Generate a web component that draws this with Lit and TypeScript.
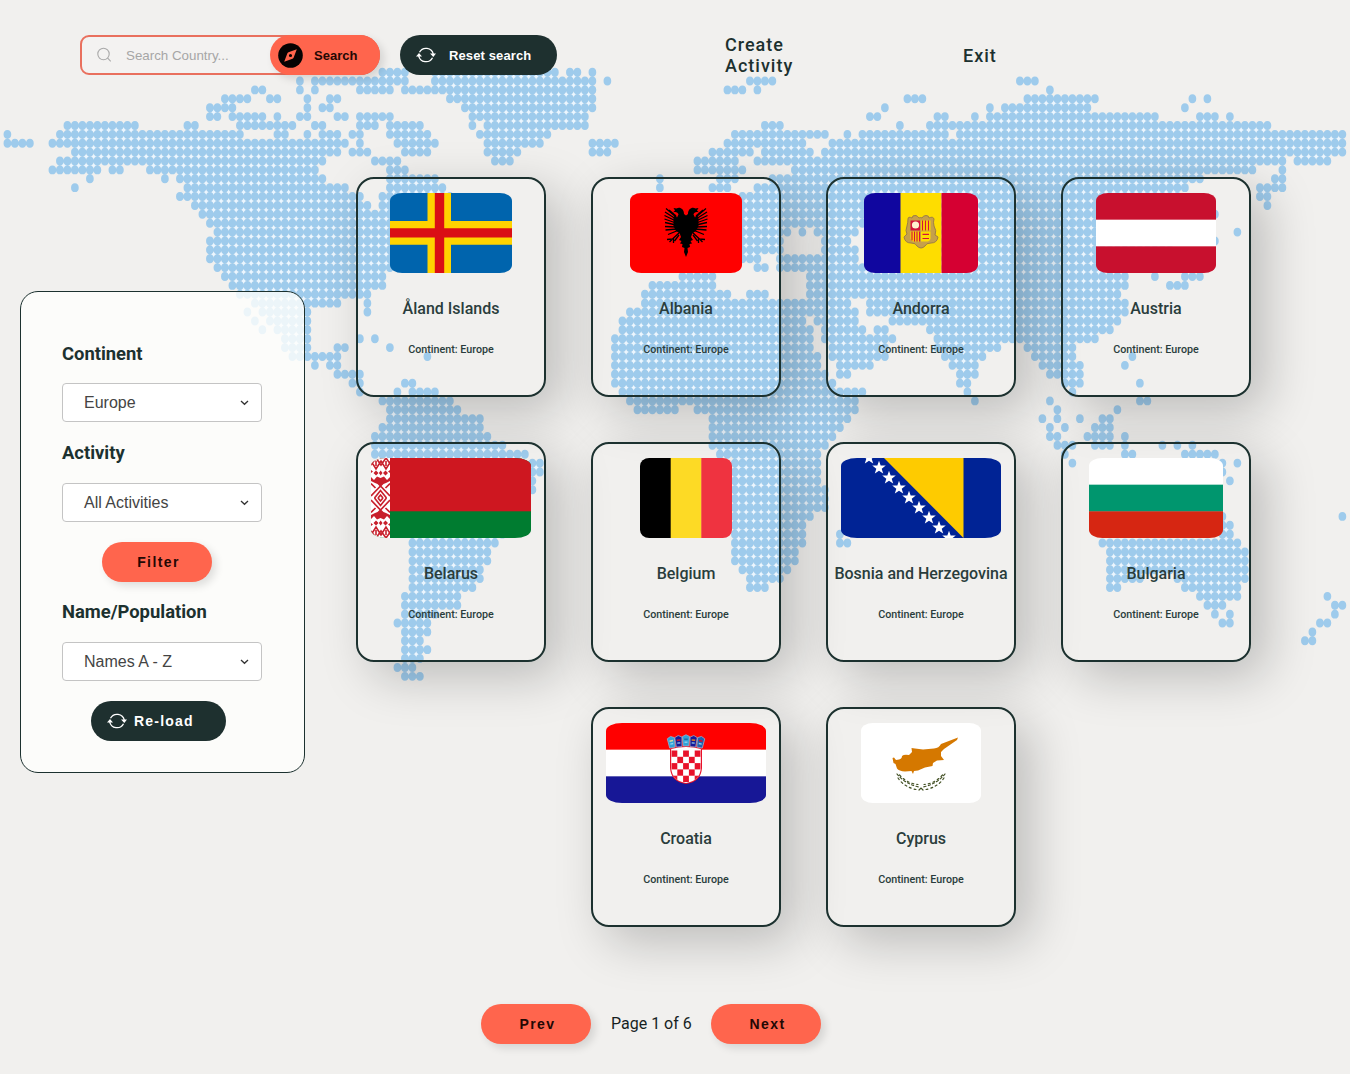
import { LitElement, html, svg, css, SVGTemplateResult } from "lit";
import { customElement, property } from "lit/decorators.js";

/* ---------- dotted world map ---------- */

const COL = 7.5;
const ROW = 8.885;
const X0 = 7.4;
const Y0 = 72.15;

// One string per dot row: inclusive column runs.
const MAP_ROWS: string[] = [
  "50-53 57-73 75-76 78",
  "39 41-53 57-78 80 99-102 135-137",
  "33-34 39 41 47-51 53-78 96-98 100 139",
  "29-32 35-36 40 43-44 59-78 120-122 136-145 158 160",
  "27-30 40 42-43 61-78 117 131 133-144 157",
  "27-28 30-34 36 39-40 44-45 47-51 62-77 115-116 124-125 129 131-153 159-161 163",
  "8-17 24-25 31-38 41-42 47-49 51-55 62 64-77 101-103 119 123-168",
  "0 7-31 36-37 40 42-44 46-47 51-56 63-72 97-109 112 114-125 127-178",
  "0-3 6-45 47 52-56 57 64-71 78-81 96-106 110-178",
  "9-44 46-48 53-56 64-68 78-80 94-99 101-107 109-178",
  "7-42 49-52 65-67 92-97 100-170 172-176",
  "6-12 14-15 19-41 51-53 92-98 105-166 170",
  "11 21 23-42 51-57 87 95-97 102-159 169-170",
  "9 24-45 51-58 87 94-96 100-157 167-170",
  "23-47 50-59 98-156 167-168",
  "25-48 50-59 98-155 168",
  "26-51 98-155 161",
  "27-51 98-155",
  "28-51 98-104 106 108-113 115-155 164",
  "27-51 98-103 109-112 115-155 161",
  "27-51 98-103 109-113 115-155",
  "27-51 98-100 103-113 115-155",
  "28-51 100-101 103-155",
  "29-50 90-94 107-149 153 157-159",
  "30-50 86-94 107-149 155-157",
  "31-48 85-96 99-101 107-148",
  "33-44 48 85-112 115-149",
  "32 34-40 48 83-113 115-149",
  "33 35-40 82-106 108-113 118-148",
  "34 36-40 82-107 109-114 116-117 123-147",
  "37-40 47 49 81-107 109-118 124-145",
  "37-40 44-45 51 81-107 110-117 124-132 136-142",
  "38-44 56 81-108 110-117 125-130 137-142 150",
  "41 43-44 81-108 111-115 126-129 138-143 149",
  "44-47 81-109 111-112 127-129 139-143",
  "46-47 53-54 81-110 127-128 141-143 151",
  "47 52 54-57 82-114 128 142",
  "50-59 83-113 129 139 151-152",
  "51-60 84-89 92-113 140 148",
  "51-63 94-112 138 140 143 146-147",
  "50-63 94-111 139 141 145-147",
  "49-64 94-110 139-140 144-147 149",
  "49-66 94-109 140-142 145-147 149 154 156 158",
  "49-69 95-108 141 149-150 157-161",
  "50-68 70-71 97-108 142 162 164",
  "50-68 70-71 97-108 162",
  "51-68 70 97-108 163",
  "52-68 70 97-109",
  "53-68 97-109",
  "53-68 97-109",
  "54-67 97-107 162 178",
  "54-66 97-106 162-163",
  "54-66 97-106 111 162-163",
  "54-65 97-106 111-112 146-164",
  "54-64 97-105 147-165",
  "54-64 97-105 147-165",
  "54-63 98-104 147-165",
  "54-63 99-103 147-151 156-165",
  "54-62 99-101 147-148 157-164",
  "53-60 159-164 176",
  "53-60 160-162 177-178",
  "53-57 161 163 177",
  "52-56 162-163 175-176",
  "53-56 174",
  "53-55 173-174",
  "53-56",
  "53-55",
  "52-54",
  "53-55",
];

function buildMap(): { dots: string; sparks: string } {
  const grid = MAP_ROWS.map((row) => {
    const set = new Set<number>();
    for (const run of row.split(" ")) {
      const [a, b] = run.split("-").map(Number);
      for (let c = a; c <= (b ?? a); c++) set.add(c);
    }
    return set;
  });
  const dots: string[] = [];
  const sparks: string[] = [];
  grid.forEach((set, r) => {
    const y = Y0 + r * ROW;
    const below = grid[r + 1];
    set.forEach((c) => {
      const x = X0 + c * COL;
      dots.push(
        `M${(x - 3.85).toFixed(2)} ${y.toFixed(2)}c0-2.9 1.4-4.45 3.85-4.45s3.85 1.55 3.85 4.45s-1.4 4.45-3.85 4.45s-3.85-1.55-3.85-4.45z`
      );
      if (below && set.has(c + 1) && below.has(c) && below.has(c + 1)) {
        sparks.push(`M${(x + 2).toFixed(2)} ${(y + ROW / 2 - 1.8).toFixed(2)}h3.5v3.6h-3.5z`);
      }
    });
  });
  return { dots: dots.join(""), sparks: sparks.join("") };
}

const MAP = buildMap();

@customElement("world-map")
export class WorldMap extends LitElement {
  static styles = css`
    :host { display: block; }
    .map { display: block; }
    .spark { fill: #ebf6ff; }
    .dot { fill: #9ecbec; }
  `;
  render() {
    return html`<svg class="map" width="1350" height="700" viewBox="0 0 1350 700" aria-hidden="true">
      <path class="spark" d=${MAP.sparks}></path>
      <path class="dot" d=${MAP.dots}></path>
    </svg>`;
  }
}

/* ---------- flags ---------- */

function star(cx: number, cy: number, r: number): string {
  const pts: string[] = [];
  for (let i = 0; i < 10; i++) {
    const rad = i % 2 ? r * 0.4 : r;
    const a = -Math.PI / 2 + (i * Math.PI) / 5;
    pts.push(`${(cx + rad * Math.cos(a)).toFixed(2)},${(cy + rad * Math.sin(a)).toFixed(2)}`);
  }
  return pts.join(" ");
}

const stripes = (w: number, colors: string[]) =>
  colors.map((c, i) => svg`<rect y=${(i * 80) / 3} width=${w} height="27" fill=${c}></rect>`);

const eagleHalf = svg`
  <path d="M56 22.500 L54 21 C54 15.500 49.500 13.500 46.500 15.500 L43.500 15 L45 17.500 L43 19.500 C46 18.500 48 19.500 48.500 21.500 L47 24.500 L45 21.500 L43.500 25 L43.500 33 L46 38 L49.500 40 L51 44 L49 47 L51.500 48 L50 50.500 L52.500 51 L52 54 L54.500 55 L54 59 L56 64 Z"></path>
  <path fill="none" stroke="#000" stroke-width="1.300" d="M46 23 L39 17 M46 24 L36 15.500 M46 26 L35 19 M46 28 L34.500 22.500 M46 30 L34.500 26 M46 32 L35 29.500 M46 34 L35 33.500 M47 36 L35.500 37 M49 37 L38 41.500 M50 39 L42.500 46 L37 46.500 M42.500 46 L39.500 49 M43.500 45 L43.500 50 M49 42 L44.500 48"></path>`;

const crownShields: [number, string, string][] = [
  [66, "#2ea3d9", "#d8d8a0"],
  [73, "#171796", "#d01030"],
  [80, "#2ea3d9", "#1d6fa8"],
  [87, "#171796", "#e08020"],
  [94, "#1f62b0", "#d01030"],
];

const checks: [number, number][] = [];
for (let r = 0; r < 6; r++) for (let c = 0; c < 5; c++) if ((r + c) % 2 === 0) checks.push([c, r]);

const ornament = (flip: boolean) => svg`<g transform=${flip ? "translate(0 80) scale(1 -1)" : ""}>
  <path fill="none" stroke="#c8202c" stroke-width="1.600" d="M0 7 L5 0 L10 7 L15 0 L20 7 M0 3 L5 11 L10 3 L15 11 L20 3 M5 3 v5 M15 3 v5"></path>
  <path fill="#c8202c" d="M0 12 l2 1.500 l-2 1.500z M19 12 l-2 1.500 l2 1.500z M5 12.500 l2.500 2.500 l-2.500 2.500 l-2.500-2.500z M14.500 12.500 l2.500 2.500 l-2.500 2.500 l-2.500-2.500z M9.700 12.500 l1.800 2.500 l-1.800 2.500 l-1.800-2.500z"></path>
  <path fill="#c8202c" d="M0 19 L3 22 L6 18.500 L9.500 20 L13 18.500 L16 22 L19 19 V23 L15 25 L12.500 26 L9.500 29 L6.500 26 L4 25 L0 23Z"></path>
  <path fill="none" stroke="#c8202c" stroke-width="1.700" d="M0 25.500 L4.500 30 M19 25.500 L14.500 30 M9.500 28 L0 38 M9.500 28 L19 38 M3.500 40 L9.500 32.500 L15.500 40 M7 40 L9.500 37 L12 40"></path>
</g>`;

const FLAGS: Record<string, { w: number; art: SVGTemplateResult }> = {
  aland: {
    w: 122,
    art: svg`<rect width="122" height="80" fill="#0064ad"></rect>
      <path fill="#ffd300" d="M37.500 0h23.500v80h-23.500z M0 28h122v23.700h-122z"></path>
      <path fill="#da0e15" d="M44.800 0h9.400v80h-9.400z M0 35.200h122v9.400h-122z"></path>`,
  },
  albania: {
    w: 112,
    art: svg`<rect width="112" height="80" fill="#ff0000"></rect>
      ${eagleHalf}<g transform="translate(112 0) scale(-1 1)">${eagleHalf}</g>`,
  },
  andorra: {
    w: 114,
    art: svg`<rect width="37" height="80" fill="#10069f"></rect>
      <rect x="36.500" width="41" height="80" fill="#fedd00"></rect>
      <rect x="77.500" width="37" height="80" fill="#d50032"></rect>
      <path fill="#c6a04a" stroke="#9d7f45" stroke-width="1" d="M44 26 q0-3 4-1 q0-3 4-2.500 q2 1 3 2.500 q2-1 3 0 q1-2.500 4-2.500 q3 0 3 2.500 q4-2 5 1 q-1 3 0 7 q3 5 1 9 l3 2 q-1 6-7 6 q-5 0-6 3 q-4 4-8 0 q-1-3-6-3 q-6 0-7-6 l3-3 q-2-3 0-8 q1-4 1-7z"></path>
      <rect x="46.500" y="27.500" width="9.500" height="10" fill="#d2143a"></rect>
      <circle cx="51.500" cy="32" r="3.600" fill="#fff2d0"></circle>
      <path fill="#fedd00" d="M57 27.500h9.500v10h-9.500z M46.500 38.500h9.500v10h-7q-2.500-1-2.500-3z M57 38.500h9.500v7q0 2-2.500 3h-7z"></path>
      <path stroke="#d2143a" stroke-width="1.200" fill="none" d="M58.500 27.500v10 M61.500 27.500v10 M64.500 27.500v10 M48 38.500v9 M50.500 38.500v10 M53 38.500v10 M55.500 38.500v10 M58.500 41.300h6.500 M58.500 45.500h6.500"></path>`,
  },
  austria: { w: 120, art: svg`${stripes(120, ["#c8102e", "#ffffff", "#c8102e"])}` },
  belarus: {
    w: 160,
    art: svg`<rect width="160" height="80" fill="#007c30"></rect>
      <rect width="160" height="53.300" fill="#ce1720"></rect>
      <rect width="19" height="80" fill="#fff"></rect>
      <svg width="19" height="80">${ornament(false)}${ornament(true)}</svg>`,
  },
  belgium: {
    w: 92,
    art: svg`<rect width="31" height="80" fill="#000"></rect>
      <rect x="30.700" width="31" height="80" fill="#fdda25"></rect>
      <rect x="61.300" width="31" height="80" fill="#ef3340"></rect>`,
  },
  bosnia: {
    w: 160,
    art: svg`<rect width="160" height="80" fill="#002395"></rect>
      <path fill="#fecb00" d="M43 0H122.500V80Z"></path>
      ${[0, 1, 2, 3, 4, 5, 6, 7, 8].map(
        (i) => svg`<polygon fill="#fff" points=${star(28 + i * 10, -0.2 + i * 10, 7.1)}></polygon>`
      )}`,
  },
  bulgaria: { w: 134, art: svg`${stripes(134, ["#ffffff", "#00966e", "#d62612"])}` },
  croatia: {
    w: 160,
    art: svg`${stripes(160, ["#ff0000", "#ffffff", "#171796"])}
      <path fill="#e8112a" d="M64 25 Q80 20.500 96 25 V45 Q95 59 80 61 Q65 59 64 45Z"></path>
      <svg width="160" height="80"><clipPath id="cro"><path d="M65.200 26 Q80 22 94.800 26 V45 Q94 58 80 60 Q66 58 65.200 45Z"></path></clipPath>
        <g clip-path="url(#cro)"><rect x="64" y="22" width="32" height="40" fill="#fff"></rect>
        ${checks.map(
          ([c, r]) => svg`<rect x=${65.500 + c * 5.8} y=${27.500 + r * 6.3} width="5.800" height="6.300" fill="#e8112a"></rect>`
        )}</g></svg>
      ${crownShields.map(
        ([x, a, b], i) => {
          const y = 13.5 + Math.abs(i - 2) * 0.8;
          return svg`<g transform=${`rotate(${(i - 2) * 5} ${x} 22)`}>
            <path fill=${a} stroke="#9fb4d0" stroke-width=".7" d=${`M${x - 3.600} ${y} l3.600-1.800 l3.600 1.800 l-.8 9.500 h-5.600z`}></path>
            <rect x=${x - 1.800} y=${y + 2} width="3.600" height="1.500" fill=${b}></rect>
            <rect x=${x - 1.500} y=${y + 5} width="3" height="1.400" fill="#8fd0ee"></rect></g>`;
        }
      )}`,
  },
  cyprus: {
    w: 120,
    art: svg`<rect width="120" height="80" fill="#fff"></rect>
      <path fill="#d57800" d="M31.500 35 L33 34.500 L35 37 L38 36.500 Q41 35.500 41 33 Q43 31 48 32 L51 29 L50.500 25 L54 25.500 L62 26.500 L73 25.500 Q78 25 80 21 L97 14.500 L96 17 L83 26 L80 29 L80 33 L83 37 L76 37.500 L72 40 L71.500 43 L64 44.500 L57 47.500 L53 48 L52 51 L50.500 48 L44 48.500 Q38 48 36 45.500 L34.500 41 L32.500 40Z"></path>
      <g fill="none" stroke="#435125" stroke-width="1.200" stroke-linecap="round">
        <path stroke-dasharray="2.200 2.400" d="M36 51 Q44 61 58 64 M84 51 Q76 61 62 64"></path>
        <path stroke-dasharray="2 3" d="M38.500 52 Q46 60.500 57 61.500 M81.500 52 Q74 60.500 63 61.500 M37 55 Q43 64 55 66.500 M83 55 Q77 64 65 66.500"></path>
        <path d="M58 67 l2-2 l2 2"></path>
      </g>`,
  },
};

@customElement("country-card")
export class CountryCard extends LitElement {
  @property() flag = "";
  @property() name = "";
  @property() continent = "";

  static styles = css`
    :host { display: block; }
    .card {
      box-sizing: border-box;
      width: 190px;
      height: 220px;
      border: 2px solid #1c312f;
      border-radius: 18px;
      padding-top: 14px;
      display: flex;
      flex-direction: column;
      align-items: center;
      font-family: Roboto, sans-serif;
      color: #2a3d3c;
      box-shadow: 15px 15px 50px rgba(0, 0, 0, 0.22);
    }
    .flag { display: block; height: 80px; border-radius: 10%; overflow: hidden; }
    .name {
      margin: 26px 0 0;
      font-size: 16px;
      line-height: 20px;
      font-weight: 500;
      white-space: nowrap;
    }
    .continent { margin: 24px 0 0; font-size: 10.72px; line-height: 14px; font-weight: 500; }
  `;

  render() {
    const f = FLAGS[this.flag];
    return html`<article class="card">
      <svg class="flag" width=${f.w} height="80" viewBox="0 0 ${f.w} 80" role="img">${f.art}</svg>
      <h2 class="name">${this.name}</h2>
      <p class="continent">Continent: ${this.continent}</p>
    </article>`;
  }
}

/* ---------- icons ---------- */

const searchIcon = html`<svg width="16" height="16" viewBox="0 0 16 16" fill="none" stroke="#a9a9a9" stroke-width="1.100">
  <circle cx="7.500" cy="7" r="5.700"></circle><path d="M11.700 11.200 L14.700 14.300"></path></svg>`;

const compassIcon = html`<svg width="26" height="26" viewBox="0 0 26 26">
  <circle cx="13.500" cy="13.500" r="12.300" fill="#060303"></circle>
  <path fill="#ff654d" fill-rule="evenodd" d="M19.800 7.200 L16.700 15.500 Q16.400 16.400 15.500 16.700 L7.200 19.800 L10.300 11.500 Q10.600 10.600 11.500 10.300Z M13.500 11.900a1.600 1.600 0 1 0 0 3.200a1.600 1.600 0 1 0 0-3.200z"></path></svg>`;

const syncIcon = html`<svg width="20" height="18" viewBox="0 0 20 18" fill="none" stroke="#fff" stroke-width="1.300">
  <path d="M3.500 6.300 A7.400 7.400 0 0 1 17.300 8.200"></path>
  <path d="M16.500 11.700 A7.400 7.400 0 0 1 2.700 9.800"></path>
  <path fill="#fff" stroke="none" d="M14 7.600 h6 l-2.700 3.400z M0 10.400 h6 l-3-3.400z"></path></svg>`;

const chevron = html`<svg width="9" height="6" viewBox="0 0 9 6" fill="none" stroke="#333" stroke-width="1.300">
  <path d="M1 1 L4.500 4.300 L8 1"></path></svg>`;

/* ---------- page ---------- */

const COUNTRIES: [string, string][] = [
  ["aland", "Åland Islands"],
  ["albania", "Albania"],
  ["andorra", "Andorra"],
  ["austria", "Austria"],
  ["belarus", "Belarus"],
  ["belgium", "Belgium"],
  ["bosnia", "Bosnia and Herzegovina"],
  ["bulgaria", "Bulgaria"],
  ["croatia", "Croatia"],
  ["cyprus", "Cyprus"],
];

@customElement("app-root")
export class AppRoot extends LitElement {
  static styles = css`
    :host {
      display: block;
      position: relative;
      width: 1350px;
      height: 1074px;
      overflow: hidden;
      background: #f1f0ee;
      font-family: Roboto, sans-serif;
      color: #1c312f;
    }
    .backdrop { position: absolute; inset: 0; }
    .page { position: relative; display: flex; flex-direction: column; height: 1074px; }
    .header { display: flex; align-items: flex-start; padding: 35px 0 0 80px; height: 177px; box-sizing: border-box; }
    .search {
      box-sizing: border-box;
      width: 300px;
      height: 40px;
      border: 2px solid #e9705e;
      border-radius: 9px 20px 20px 9px;
      background: #f3f2f1;
      display: flex;
      align-items: center;
      padding-left: 14px;
    }
    .placeholder {
      flex: 1;
      padding-left: 14px;
      font: 13.333px "Liberation Sans", sans-serif;
      color: #a6a6a6;
      white-space: nowrap;
    }
    .btn {
      box-sizing: border-box;
      display: flex;
      align-items: center;
      justify-content: center;
      width: 110px;
      height: 40px;
      border: 0;
      border-radius: 20px;
      padding: 0 0 0 3px;
      background: #ff654d;
      color: #240804;
      font: bold 14px "Liberation Sans", sans-serif;
      letter-spacing: 1.4px;
      box-shadow: 4px 4px 8px rgba(0, 0, 0, 0.12);
      white-space: nowrap;
    }
    .btn.find { flex: none; margin-right: -2px; justify-content: flex-start; padding-left: 7px; gap: 11px; font-size: 13px; letter-spacing: 0; }
    .btn.dark { background: #1e302f; color: #fff; box-shadow: none; }
    .btn.reset { width: 157px; margin-left: 20px; justify-content: flex-start; padding-left: 16px; gap: 13px; font-size: 13px; letter-spacing: 0.12px; }
    .nav { display: flex; align-items: center; height: 40px; margin-left: 168px; font-size: 18px; line-height: 21px; font-weight: 500; letter-spacing: 1px; }
    .create { width: 100px; }
    .exit { margin-left: 138px; }
    .body { display: flex; align-items: flex-start; }
    .panel {
      box-sizing: border-box;
      width: 285px;
      height: 482px;
      margin: 114px 0 0 20px;
      padding: 51px 0 0 41px;
      border: 1px solid #1c312f;
      border-radius: 18px;
      background: rgba(255, 255, 253, 0.8);
      display: flex;
      flex-direction: column;
    }
    .label { margin: 0 0 18px; font-size: 18.4px; line-height: 22px; font-weight: 700; }
    .select {
      box-sizing: border-box;
      width: 200px;
      height: 39px;
      border: 1px solid #c4c4c4;
      border-radius: 4px;
      background: #fff;
      padding: 0 12px 0 21px;
      display: flex;
      align-items: center;
      justify-content: space-between;
      font: 16px "Liberation Sans", sans-serif;
      color: #444;
      margin-bottom: 20px;
    }
    .label.second { margin-bottom: 19px; }
    .btn.filter { margin: 0 0 19px 40px; }
    .label.third { margin-bottom: 19px; }
    .btn.reload { width: 135px; margin-left: 29px; justify-content: flex-start; padding-left: 16px; gap: 7px; letter-spacing: 1.2px; }
    .cards { width: 935px; margin-left: 31px; display: flex; flex-wrap: wrap; justify-content: center; gap: 45px; }
    .pager { display: flex; align-items: center; gap: 20px; padding-left: 481px; margin-top: 77px; }
    .page-no { font-size: 16px; line-height: 20px; width: 80px; text-align: center; color: #171f1f; white-space: nowrap; }
  `;

  render() {
    return html`
      <world-map class="backdrop"></world-map>
      <div class="page">
        <header class="header">
          <div class="search">
            ${searchIcon}
            <span class="placeholder">Search Country...</span>
            <button class="btn find">${compassIcon}<span>Search</span></button>
          </div>
          <button class="btn dark reset">${syncIcon}<span>Reset search</span></button>
          <nav class="nav"><span class="create">Create Activity</span><span class="exit">Exit</span></nav>
        </header>
        <main class="body">
          <aside class="panel">
            <h3 class="label">Continent</h3>
            <div class="select"><span>Europe</span>${chevron}</div>
            <h3 class="label second">Activity</h3>
            <div class="select"><span>All Activities</span>${chevron}</div>
            <button class="btn filter">Filter</button>
            <h3 class="label third">Name/Population</h3>
            <div class="select"><span>Names A - Z</span>${chevron}</div>
            <button class="btn dark reload">${syncIcon}<span>Re-load</span></button>
          </aside>
          <section class="cards">
            ${COUNTRIES.map(
              ([flag, name]) =>
                html`<country-card .flag=${flag} .name=${name} .continent=${"Europe"}></country-card>`
            )}
          </section>
        </main>
        <footer class="pager">
          <button class="btn">Prev</button>
          <span class="page-no">Page 1 of 6</span>
          <button class="btn">Next</button>
        </footer>
      </div>
    `;
  }
}
